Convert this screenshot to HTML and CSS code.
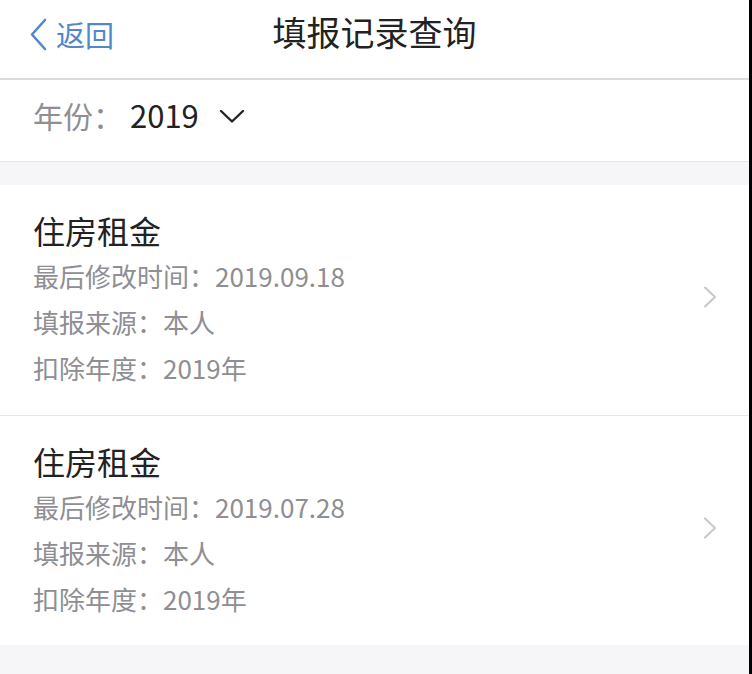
FILE: index.html
```html
<!DOCTYPE html>
<html lang="zh">
<head>
<meta charset="utf-8">
<link rel="stylesheet" href="styles.css">
</head>
<body>
<div class="app">
  <header class="nav">
    <div class="back">
      <svg class="back-icon" width="19" height="33" viewBox="0 0 19 33"><polyline points="16,2 3,16.5 16,31" fill="none" stroke="#5287c9" stroke-width="2.6" stroke-linecap="round" stroke-linejoin="round"/></svg>
      <span class="back-text">返回</span>
    </div>
    <h1 class="title">填报记录查询</h1>
  </header>
  <div class="filter">
    <span class="filter-label">年份：</span>
    <span class="filter-value">2019</span>
    <svg class="filter-icon" width="26" height="16" viewBox="0 0 26 16"><polyline points="2,3 13,13.5 24,3" fill="none" stroke="#222" stroke-width="2.4" stroke-linecap="round" stroke-linejoin="round"/></svg>
  </div>
  <div class="gap"></div>
  <div class="list">
    <div class="card">
      <div class="card-body">
        <div class="card-title">住房租金</div>
        <div class="card-line">最后修改时间：2019.09.18</div>
        <div class="card-line">填报来源：本人</div>
        <div class="card-line">扣除年度：2019年</div>
      </div>
      <svg class="arrow" width="14" height="22" viewBox="0 0 14 22"><polyline points="2,1.5 12,11 2,20.5" fill="none" stroke="#c7c7cc" stroke-width="2" stroke-linecap="round" stroke-linejoin="round"/></svg>
    </div>
    <div class="card">
      <div class="card-body">
        <div class="card-title">住房租金</div>
        <div class="card-line">最后修改时间：2019.07.28</div>
        <div class="card-line">填报来源：本人</div>
        <div class="card-line">扣除年度：2019年</div>
      </div>
      <svg class="arrow" width="14" height="22" viewBox="0 0 14 22"><polyline points="2,1.5 12,11 2,20.5" fill="none" stroke="#c7c7cc" stroke-width="2" stroke-linecap="round" stroke-linejoin="round"/></svg>
    </div>
  </div>
  <div class="footer-gap"></div>
</div>
</body>
</html>
```

FILE: styles.css
```css
* { box-sizing: border-box; }
html, body {
  margin: 0;
  padding: 0;
  background: #000;
}
body {
  font-family: "Noto Sans CJK SC", "Noto Sans", sans-serif;
  width: 752px;
  height: 674px;
  overflow: hidden;
}
.app {
  width: 749px;
  height: 674px;
  background: #f6f6f9;
  display: flex;
  flex-direction: column;
}
.nav {
  height: 80px;
  background: #fff;
  border-bottom: 2px solid #dcdcdf;
  display: flex;
  align-items: center;
  justify-content: center;
  position: relative;
}
.back {
  position: absolute;
  left: 29px;
  top: 17px;
  display: flex;
  align-items: center;
  gap: 8px;
}
.back-icon { display: block; }
.back-text {
  color: #5287c9;
  font-size: 29px;
  line-height: 34px;
}
.title {
  margin: 0;
  font-weight: 400;
  font-size: 34px;
  line-height: 40px;
  color: #222;
  margin-top: -14px;
}
.filter {
  height: 82px;
  background: #fff;
  border-bottom: 1px solid #e6e6ea;
  display: flex;
  align-items: center;
  padding-left: 33px;
  padding-bottom: 11px;
}
.filter-label {
  color: #8e8e93;
  font-size: 30px;
  line-height: 40px;
}
.filter-value {
  color: #222;
  font-size: 31px;
  line-height: 40px;
  margin-left: 7px;
}
.filter-icon {
  display: block;
  margin-left: 20px;
  margin-top: 2px;
}
.gap { height: 23px; }
.list { background: #fff; }
.card {
  height: 230px;
  padding: 22px 32px 24px 33px;
  display: flex;
  align-items: center;
  justify-content: space-between;
}
.card + .card { border-top: 1px solid #e6e6e9; }
.card-title {
  font-size: 32px;
  line-height: 46px;
  color: #222;
}
.card-line {
  font-size: 26px;
  line-height: 46px;
  color: #8e8e93;
}
.arrow { display: block; margin-top: -4px; }
.footer-gap { flex: 1; }
```
